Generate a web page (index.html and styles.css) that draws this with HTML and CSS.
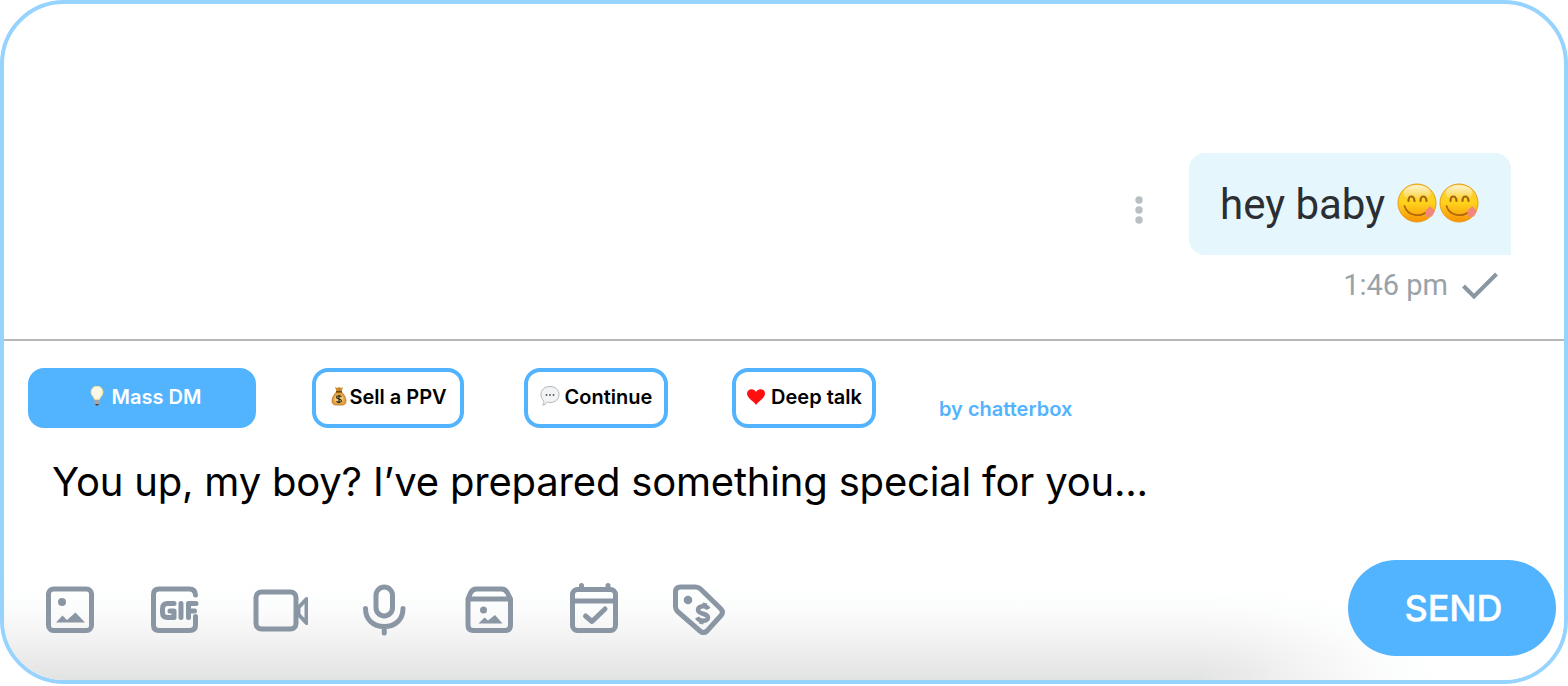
FILE: index.html
```html
<!DOCTYPE html>
<html lang="en">
<head>
<meta charset="UTF-8">
<meta name="viewport" content="width=device-width, initial-scale=1.0">
<title>Chat</title>
<link rel="stylesheet" href="styles.css">
</head>
<body>

<svg class="defs" width="0" height="0">
    <defs>
        <linearGradient id="face" x1="0" y1="0" x2="0" y2="1">
            <stop offset="0" stop-color="#f6cf3a"/>
            <stop offset="0.5" stop-color="#ffd21c"/>
            <stop offset="1" stop-color="#f99204"/>
        </linearGradient>
        <linearGradient id="shine" x1="0" y1="0" x2="0" y2="1">
            <stop offset="0" stop-color="#fff" stop-opacity="0.75"/>
            <stop offset="1" stop-color="#fff" stop-opacity="0"/>
        </linearGradient>
        <symbol id="yum" viewBox="0 0 42 42">
            <circle cx="21" cy="21" r="19" fill="url(#face)" stroke="#ee9a12" stroke-width="1"/>
            <ellipse cx="21" cy="11" rx="13.500" ry="8" fill="url(#shine)"/>
            <path d="M12.500 19c0-6 5.500-6 6 0M24.500 19c0-6 5.500-6 6 0" fill="none" stroke="#a5650a" stroke-width="2.200" stroke-linecap="round"/>
            <path d="M8.500 24c3 10 16 12 23 5" fill="none" stroke="#b0690a" stroke-width="1.800" stroke-linecap="round"/>
            <path d="M29 29.500l5-5.500 5 5-3 5.500-5.500 .500z" fill="#f4877c"/>
        </symbol>
    </defs>
</svg>

<div class="chat">
    <div class="messages">
        <div class="message">
            <svg class="dots" width="8" height="28" viewBox="0 0 8 28" fill="#b9bfc3">
                <circle cx="4" cy="4" r="3.700"/>
                <circle cx="4" cy="14" r="3.700"/>
                <circle cx="4" cy="24" r="3.700"/>
            </svg>
            <div class="bubble">
                <span>hey baby</span>
                <svg class="emoji first" width="42" height="42"><use href="#yum"/></svg>
                <svg class="emoji" width="42" height="42"><use href="#yum"/></svg>
            </div>
        </div>
        <div class="status">
            <span>1:46 pm</span>
            <svg width="36" height="28" viewBox="0 0 36 28">
                <path d="M1.500 15L12 25.500L34.500 3" fill="none" stroke="#8a96a0" stroke-width="4"/>
            </svg>
        </div>
    </div>

    <div class="composer">
        <div class="actions">
            <button class="btn btn-mass">
                <svg width="14" height="20" viewBox="0 0 14 20">
                    <path d="M4.500 13.500C4 10.500 1 10 1 6a6 6 0 0 1 12 0c0 4-3 4.500-3.500 7.500z" fill="#fbf8e8" stroke="#eed98c" stroke-width="1"/>
                    <path d="M4.500 14h5v4l-1.500 1.500h-2L4.500 18z" fill="#a5a7a8"/>
                    <path d="M5 18h4l-1 1.500h-2z" fill="#444"/>
                </svg>
                <span>Mass DM</span>
            </button>
            <button class="btn btn-sell">
                <svg width="16" height="20" viewBox="0 0 16 20">
                    <path d="M4 1l2 1 2-1 2 1 2-1-1.500 4.500h-5z" fill="#c98a2c"/>
                    <path d="M5.500 6h5c2 2 4.500 5.500 4.500 9 0 3-2 4-4 4H5c-2 0-4-1-4-4 0-3.500 2.500-7 4.500-9z" fill="#e6a13a" stroke="#b9701a" stroke-width="0.800"/>
                    <path d="M5 5.800h6" stroke="#74420e" stroke-width="1.500"/>
                    <circle cx="8" cy="13" r="4.500" fill="#efc878"/>
                    <path d="M10.500 10.800c-1-1.500-5-1.500-5 .500s5 1.500 5 3.500-4 2-5 .500M8 8.800v8.500" fill="none" stroke="#2d2412" stroke-width="1.200"/>
                </svg>
                <span>Sell a PPV</span>
            </button>
            <button class="btn btn-continue">
                <svg width="20" height="20" viewBox="0 0 20 20">
                    <path d="M10 .500c5.500 0 9 3.400 9 8S15.500 16.500 10 16.500c-1 0-2-.100-3-.400-1 1.800-2.500 3-4.500 3 1-1 1.600-2.500 1.300-4C2 13.300 1 11 1 8.500 1 3.900 4.500 .500 10 .500z" fill="#f2f3f4" stroke="#b4b8bb" stroke-width="1"/>
                    <g fill="#555"><circle cx="6.500" cy="9" r="0.900"/><circle cx="10" cy="9" r="0.900"/><circle cx="13.500" cy="9" r="0.900"/></g>
                </svg>
                <span>Continue</span>
            </button>
            <button class="btn btn-talk">
                <svg width="20" height="20" viewBox="0 0 20 20">
                    <path d="M10 19C8 15 1 12.500 1 7.500 1 2.500 8 1.500 10 6c2-4.500 9-3.500 9 1.500 0 5-7 7.500-9 11.500z" fill="#ff0f0f"/>
                </svg>
                <span>Deep talk</span>
            </button>
            <span class="credit">by chatterbox</span>
        </div>

        <p class="draft">You up, my boy? I’ve prepared something special for you...</p>

        <div class="toolbar">
            <div class="tools">
                <!-- photo -->
                <svg width="56" height="56" viewBox="0 0 56 56">
                    <rect x="6.500" y="9" width="43" height="41.500" rx="5" class="line"/>
                    <circle cx="20" cy="22" r="4" class="fill"/>
                    <path d="M14 42.500l6.500-7 4.500 4.500 8.500-7.500 9.500 10z" class="fill"/>
                </svg>
                <!-- gif -->
                <svg width="56" height="56" viewBox="0 0 56 56">
                    <path d="M48.500 15q-.500-6-6-6H12q-5.500 0-5.500 5.500v30.500q0 5.500 5.500 5.500h30.500q6 0 6-5.500v-8.500" class="line round"/>
                    <path d="M27 23.500h-6.500q-5 0-5 5v4q0 5 5 5H27v-6.500h-4M34 23.500v14M41.500 37.500v-14h7.500M41.500 31h6" class="line round"/>
                </svg>
                <!-- video -->
                <svg width="56" height="56" viewBox="0 0 56 56">
                    <rect x="4" y="12" width="40" height="37" rx="5.500" class="line"/>
                    <path d="M46.500 27.500l8-8.500v24l-8-8.500z" class="line video round"/>
                </svg>
                <!-- voice -->
                <svg width="56" height="56" viewBox="0 0 56 56">
                    <rect x="20" y="7" width="16.500" height="29" rx="8.250" class="line"/>
                    <path d="M9.500 28.500c0 11 7.500 18 18.750 18S47 39.500 47 28.500M28.250 47v6" class="line round"/>
                </svg>
                <!-- vault -->
                <svg width="56" height="56" viewBox="0 0 56 56">
                    <path d="M7 19L9.500 13Q11.500 9 15.500 9h25q4 0 6 4l3 6v26q0 5.500-5.500 5.500H12.500q-5.500 0-5.500-5.500zM7 19h42" class="line"/>
                    <circle cx="22.500" cy="30" r="3.500" class="fill"/>
                    <path d="M17.500 43.500l6-6 3.500 3 7-5.500 7.500 8.500z" class="fill"/>
                </svg>
                <!-- schedule -->
                <svg width="56" height="56" viewBox="0 0 56 56">
                    <rect x="6.500" y="9.500" width="43" height="41" rx="5" class="line"/>
                    <path d="M7 21h42M15.500 5.500v4M42 5.500v4" class="line round"/>
                    <path d="M19.500 36l6.500 5.500L39 29" class="line round"/>
                </svg>
                <!-- price -->
                <svg width="56" height="56" viewBox="0 0 56 56">
                    <path d="M9.500 7h15q3 0 5 2l20 19.500q3.500 3.500 .500 7L36 51q-3.500 3-7 0L6.500 31.500q-2-2-2-5V12q0-5 5-5z" class="line"/>
                    <circle cx="17" cy="20" r="4.300" class="fill"/>
                    <path d="M37.500 29c-2.500-4.500-10.500-3-10.500 1 0 4.500 10 3 10 7.500 0 4-8.500 4.500-11 0M34 23l-1 4M31 40l-1 4" class="line dollar"/>
                </svg>
            </div>
            <button class="send">SEND</button>
        </div>
    </div>
</div>

</body>
</html>
```

FILE: styles.css
```css
* {
  box-sizing: border-box;
}
body {
  margin: 0;
  background: #fff;
  font-family: Inter, "Liberation Sans", sans-serif;
}
.defs {
  display: block;
}
.chat {
  height: 684px;
  border: 4px solid #96d3ff;
  border-radius: 64px;
  overflow: hidden;
  background: #fff;
}

/* Messages */
.messages {
  height: 337px;
  padding: 149px 53px 0 0;
  border-bottom: 2px solid #b8b8b8;
  font-family: Roboto, sans-serif;
}
.message {
  display: flex;
  justify-content: flex-end;
  align-items: center;
}
.dots {
  margin: 12px 46px 0 0;
}
.bubble {
  display: flex;
  align-items: center;
  width: 322px;
  height: 102px;
  padding: 0 0 0 31px;
  border-radius: 16px 16px 0 16px;
  background: #e5f6fd;
  color: #2b2f33;
  font-size: 42px;
}
.emoji {
  margin-bottom: 3px;
}
.emoji.first {
  margin-left: 11px;
}
.status {
  display: flex;
  justify-content: flex-end;
  align-items: center;
  gap: 14px;
  padding: 13px 13px 0 0;
  color: #9aa2a9;
  font-size: 29px;
}

/* Composer */
.composer {
  height: 339px;
  padding-top: 27px;
  background:
    linear-gradient(to top, #e1e3e2 0%, #eaeaea 20%, #f2f2f2 40%, #fafafa 65%, #fcfefd 80%, #fff 100%) left bottom / 1190px 100px no-repeat,
    radial-gradient(ellipse 260px 100px at left bottom, #e1e3e2 0%, #eaeaea 20%, #f2f2f2 40%, #fafafa 65%, #fcfefd 80%, #fff 100%) right bottom / calc(100% - 1190px) 100px no-repeat;
}
.actions {
  display: flex;
  height: 60px;
  padding-left: 24px;
}
.btn {
  display: flex;
  justify-content: center;
  align-items: center;
  height: 60px;
  padding: 0 0 3px;
  border: 4px solid #52b3ff;
  border-radius: 16px;
  background: #fff;
  color: #000;
  font-family: inherit;
  font-size: 20px;
  font-weight: 600;
  white-space: nowrap;
}
.btn svg {
  margin-bottom: 2px;
}
.btn-mass {
  width: 228px;
  gap: 8px;
  margin-right: 56px;
  padding-left: 7px;
  background: #52b3ff;
  color: #fff;
}
.btn-sell {
  width: 152px;
  gap: 2px;
  margin-right: 60px;
  padding-left: 2px;
}
.btn-continue {
  width: 144px;
  gap: 5px;
  margin-right: 64px;
}
.btn-talk {
  width: 144px;
  gap: 5px;
  margin-right: 63px;
}
.credit {
  padding-top: 29px;
  color: #52b3ff;
  font-size: 20px;
  font-weight: 600;
  line-height: 24px;
}
.draft {
  margin: 29px 0 0 48px;
  font-size: 40px;
  letter-spacing: -0.190px;
  line-height: 50px;
  white-space: nowrap;
}
.toolbar {
  display: flex;
  justify-content: space-between;
  align-items: center;
  margin-top: 53px;
  padding: 0 8px 0 38px;
}
.tools {
  display: flex;
  gap: 48.800px;
}
.line {
  fill: none;
  stroke: #8a96a3;
  stroke-width: 5;
}
.fill {
  fill: #8a96a3;
}
.round {
  stroke-linecap: round;
  stroke-linejoin: round;
}
.video {
  stroke-width: 4;
}
.dollar {
  stroke-width: 4.500;
}
.send {
  width: 208px;
  height: 96px;
  padding: 0 0 0 3px;
  border: 0;
  border-radius: 48px;
  background: #52b3ff;
  color: #fff;
  font-family: inherit;
  font-size: 36px;
  font-weight: 500;
  -webkit-text-stroke: 0.400px #fff;
}
```
